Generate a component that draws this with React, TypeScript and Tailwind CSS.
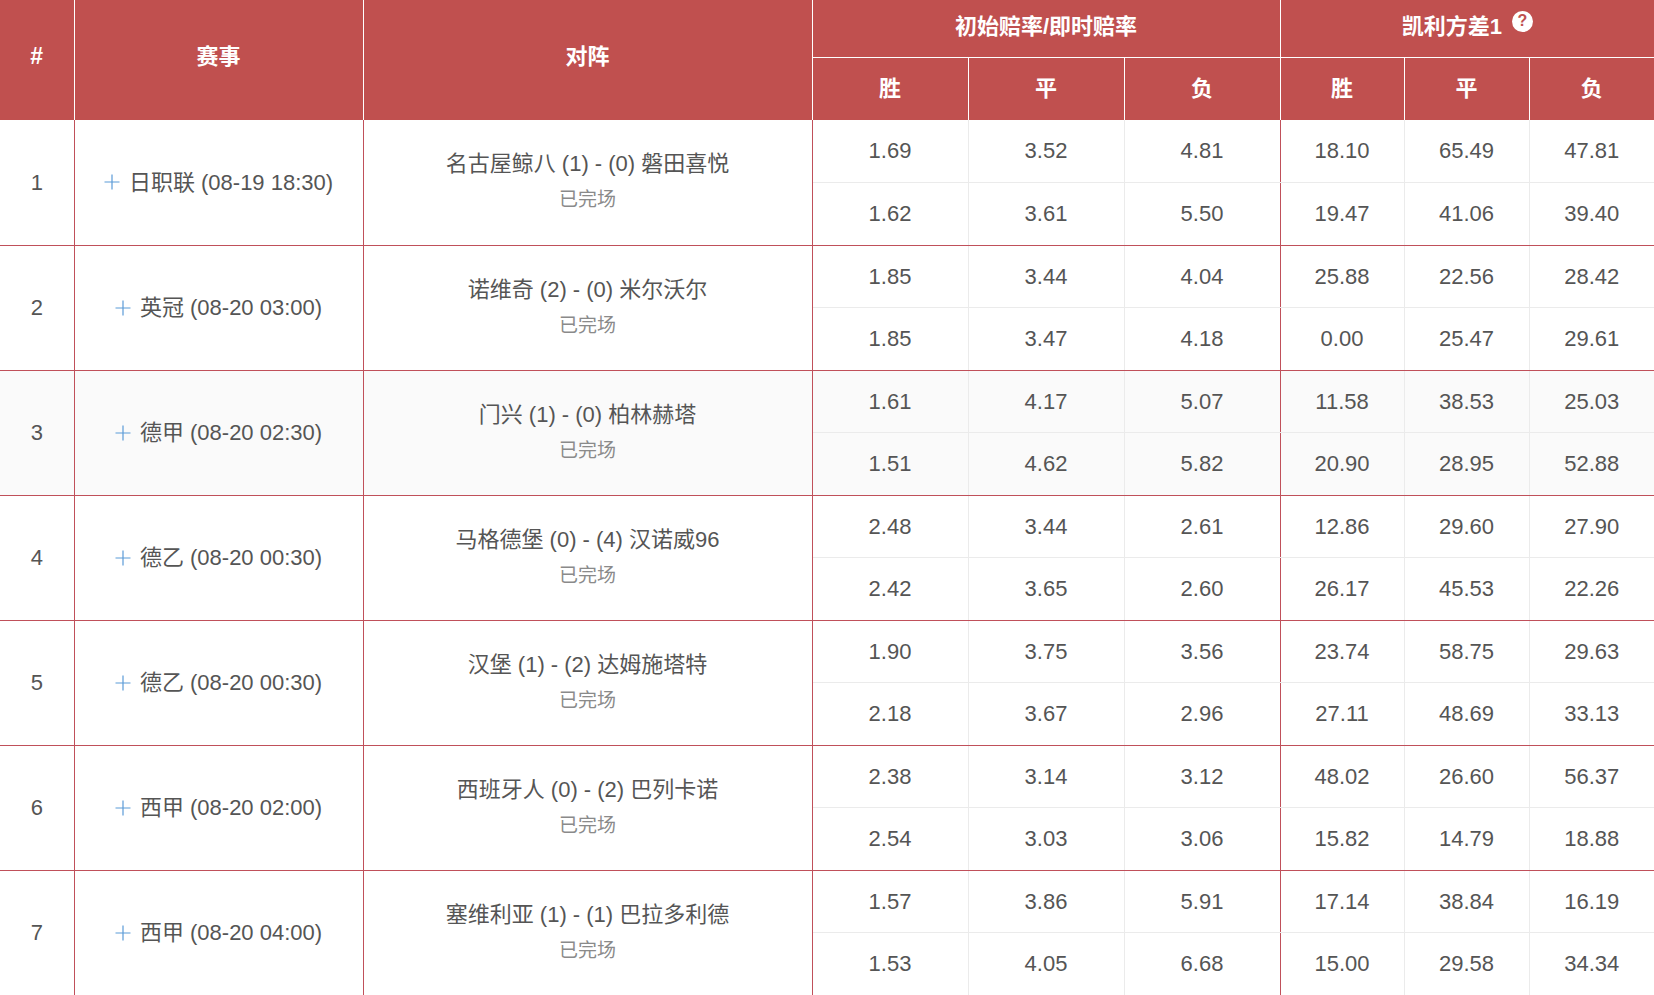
import React from "react";

type Match = {
  no: number;
  league: string;
  time: string;
  teams: string;
  a: string[];
  b: string[];
  shaded?: boolean;
};

const matches: Match[] = [
  { no: 1, league: "日职联", time: "(08-19 18:30)", teams: "名古屋鲸八 (1) - (0) 磐田喜悦", a: ["1.69", "3.52", "4.81", "18.10", "65.49", "47.81"], b: ["1.62", "3.61", "5.50", "19.47", "41.06", "39.40"] },
  { no: 2, league: "英冠", time: "(08-20 03:00)", teams: "诺维奇 (2) - (0) 米尔沃尔", a: ["1.85", "3.44", "4.04", "25.88", "22.56", "28.42"], b: ["1.85", "3.47", "4.18", "0.00", "25.47", "29.61"] },
  { no: 3, league: "德甲", time: "(08-20 02:30)", teams: "门兴 (1) - (0) 柏林赫塔", a: ["1.61", "4.17", "5.07", "11.58", "38.53", "25.03"], b: ["1.51", "4.62", "5.82", "20.90", "28.95", "52.88"], shaded: true },
  { no: 4, league: "德乙", time: "(08-20 00:30)", teams: "马格德堡 (0) - (4) 汉诺威96", a: ["2.48", "3.44", "2.61", "12.86", "29.60", "27.90"], b: ["2.42", "3.65", "2.60", "26.17", "45.53", "22.26"] },
  { no: 5, league: "德乙", time: "(08-20 00:30)", teams: "汉堡 (1) - (2) 达姆施塔特", a: ["1.90", "3.75", "3.56", "23.74", "58.75", "29.63"], b: ["2.18", "3.67", "2.96", "27.11", "48.69", "33.13"] },
  { no: 6, league: "西甲", time: "(08-20 02:00)", teams: "西班牙人 (0) - (2) 巴列卡诺", a: ["2.38", "3.14", "3.12", "48.02", "26.60", "56.37"], b: ["2.54", "3.03", "3.06", "15.82", "14.79", "18.88"] },
  { no: 7, league: "西甲", time: "(08-20 04:00)", teams: "塞维利亚 (1) - (1) 巴拉多利德", a: ["1.57", "3.86", "5.91", "17.14", "38.84", "16.19"], b: ["1.53", "4.05", "6.68", "15.00", "29.58", "34.34"] },
];

const oddsBorder = (i: number) =>
  i === 5 ? "" : i === 2 ? "border-r border-r-[#c0505a]" : "border-r border-r-[#ebebeb]";

function Plus() {
  return (
    <svg width="16" height="16" viewBox="0 0 16 16" className="shrink-0">
      <path d="M8 0.5V15.5M0.5 8H15.5" stroke="#5b9bd8" strokeWidth="1.2" fill="none" />
    </svg>
  );
}

export default function App() {
  return (
    <div
      className="h-screen w-full overflow-hidden bg-white"
      style={{ fontFamily: '"Liberation Sans", "Noto Sans CJK SC", Arial, sans-serif' }}
    >
      <table className="w-[1654px] table-fixed border-collapse">
        <colgroup>
          <col className="w-[74px]" />
          <col className="w-[289px]" />
          <col className="w-[449px]" />
          <col className="w-[156px]" />
          <col className="w-[156px]" />
          <col className="w-[156px]" />
          <col className="w-[124px]" />
          <col className="w-[125px]" />
          <col className="w-[125px]" />
        </colgroup>
        <thead className="bg-[#c0504f] text-[22px] font-bold text-white">
          <tr className="h-[57px]">
            <th rowSpan={2} className="border-r border-white pb-2 align-middle text-[23px]">#</th>
            <th rowSpan={2} className="border-r border-white pb-2 align-middle">赛事</th>
            <th rowSpan={2} className="border-r border-white pb-2 align-middle">对阵</th>
            <th colSpan={3} className="border-r border-b border-white pb-1">初始赔率/即时赔率</th>
            <th colSpan={3} className="border-b border-white pb-1">
              <span className="inline-flex items-start justify-center gap-[10px]">
                <span>凯利方差1</span>
                <span className="mt-[1px] flex h-[21px] w-[21px] items-center justify-center rounded-full bg-white text-[16px] leading-none font-bold text-[#c0504f]">
                  ?
                </span>
              </span>
            </th>
          </tr>
          <tr className="h-[63px]">
            {["胜", "平", "负", "胜", "平", "负"].map((t, i) => (
              <th key={i} className={i === 5 ? "" : "border-r border-white"}>
                {t}
              </th>
            ))}
          </tr>
        </thead>
        <tbody className="text-[22px] text-[#555]">
          {matches.map((m) => {
            const bg = m.shaded ? "bg-[#fafafa]" : "bg-white";
            const top = m.no > 1 ? "border-t border-t-[#c0505a]" : "";
            return (
              <React.Fragment key={m.no}>
                <tr className="h-[62px]">
                  <td rowSpan={2} className={`border-r border-b border-[#c0505a] ${top} ${bg} text-center align-middle`}>
                    {m.no}
                  </td>
                  <td rowSpan={2} className={`border-r border-b border-[#c0505a] ${top} ${bg} align-middle`}>
                    <div className="flex items-center justify-center gap-[9px]">
                      <Plus />
                      <span>
                        {m.league} {m.time}
                      </span>
                    </div>
                  </td>
                  <td rowSpan={2} className={`border-r border-b border-[#c0505a] ${top} ${bg} text-center align-middle`}>
                    <div className="leading-[36px]">{m.teams}</div>
                    <div className="text-[19px] leading-[36px] text-[#8a8a8a]">已完场</div>
                  </td>
                  {m.a.map((v, i) => (
                    <td key={i} className={`border-b border-b-[#ebebeb] ${top} ${bg} text-center ${oddsBorder(i)}`}>
                      {v}
                    </td>
                  ))}
                </tr>
                <tr className="h-[63px]">
                  {m.b.map((v, i) => (
                    <td key={i} className={`border-b border-b-[#c0505a] ${bg} text-center ${oddsBorder(i)}`}>
                      {v}
                    </td>
                  ))}
                </tr>
              </React.Fragment>
            );
          })}
        </tbody>
      </table>
    </div>
  );
}
